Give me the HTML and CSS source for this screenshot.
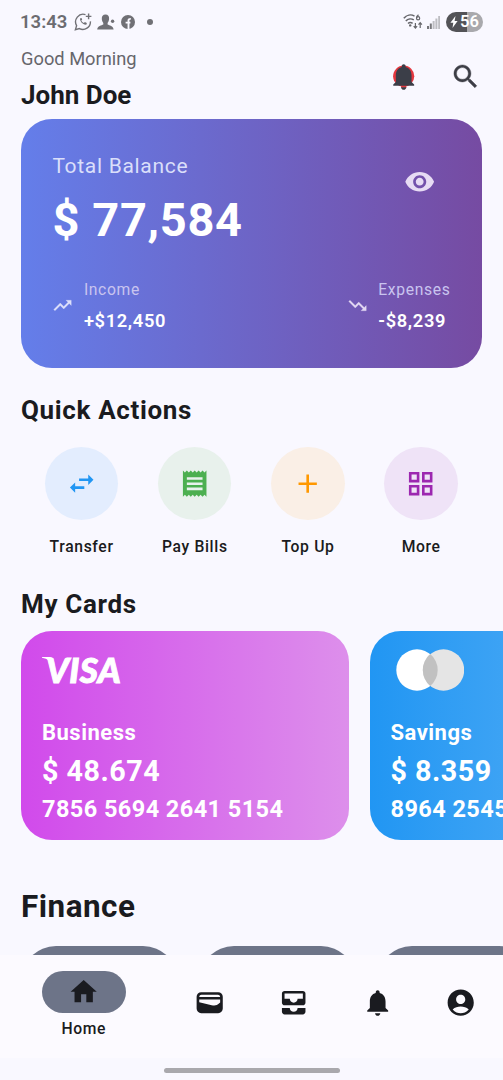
FILE: index.html
```html
<!DOCTYPE html>
<html lang="en">
<head>
<meta charset="utf-8">
<title>Wallet</title>
<link rel="stylesheet" href="styles.css">
</head>
<body>
<div class="screen">
  <div class="status">
    <span class="clock">13:43</span>
    <svg class="st-wa" viewBox="0 0 18 18" fill="none" stroke="#717176" stroke-width="1.4"><path d="M11.5 1.6A7.6 7.6 0 0 0 2.6 12.6L1.4 16.7l4-1.1A7.6 7.6 0 0 0 16.4 8.4"/><path d="M14.6 0.6v5.6M11.8 3.4h5.6"/><path d="M6.2 5.2c-1 2.600 3.200 7.400 6.400 6.400l.2-1.600-1.900-1-1 1C8.700 9.500 7.800 8.600 7.300 7.500l.9-1-.7-1.600z" fill="#717176" stroke="none"/></svg>
    <svg class="st-user" viewBox="0 0 18 16" fill="#707075"><path d="M8.500 0.500c2.600 0 3.800 1.700 3.600 4.400-.1 1.900-1 3.200-1.500 4v1.600c1.800 1 5.600 1.300 6 5H0.200c.4-3.700 4.300-4 6.100-5V8.900c-.5-.8-1.400-2.100-1.500-4C4.700 2.200 5.900.5 8.500.5z"/><circle cx="15.600" cy="7.300" r="1.700"/></svg>
    <svg class="st-fb" viewBox="0 0 14 14"><circle cx="7" cy="7" r="7" fill="#707075"/><path d="M7.500 14V5.300c0-1 .6-1.500 2.300-1.400M4.600 7.600h4.800" fill="none" stroke="#f9f8ff" stroke-width="1.900"/></svg>
    <span class="dot"></span>
    <span class="grow"></span>
    <svg class="st-wifi" viewBox="0 0 20 16" fill="none" stroke="#66666b" stroke-width="1.500"><path d="M.8 4.300C3.600.9 8 .2 11.500 2.100M2.800 7c2.100-2.300 5.500-2.700 8-1.100M5 9.500c1.200-1.100 3.100-1.200 4.600-.1"/><circle cx="7.200" cy="11.400" r="1.200" fill="#66666b" stroke="none"/><path d="M15.500.8c-1.500 1.200-2 2.200-1.900 3.200" stroke-width="1.200"/><circle cx="15.100" cy="4.300" r="1.600" stroke-width="1.200"/><path d="M12.400 9v5M10.700 12.200l1.700 1.900 1.700-1.900M17.200 14V8.800M15.500 10.600l1.700-1.900 1.700 1.900" stroke-width="1.200"/></svg>
    <svg class="st-sig" viewBox="0 0 13 13"><path d="M0 10h2v3H0zM2.800 7.500h2V13h-2z" fill="#77777b"/><path d="M5.600 5h2v8h-2zM8.400 2.500h2V13h-2zM11.200 0h1.800v13h-1.800z" fill="#bdbdc2"/></svg>
    <span class="battery"><svg viewBox="0 0 8 12" fill="#fff"><path d="M5.500 0L.4 6.800h2.900L2.500 12l5.100-7H4.600z"/></svg>56</span>
  </div>

  <header class="header">
    <div class="who"><div class="hello">Good Morning</div><div class="name">John Doe</div></div>
    <div class="alert"><svg class="icon" viewBox="0 0 24 24"><circle cx="12" cy="11.600" r="8.100" fill="#e4373f"/><path fill="#e4373f" d="M10 19h4v1.500h-4z"/><path fill="#3b3e48" d="M12 22c1.100 0 2-.9 2-2h-4c0 1.100.89 2 2 2zm6-6v-5c0-3.070-1.640-5.640-4.500-6.320V4c0-.83-.67-1.500-1.500-1.500s-1.500.67-1.500 1.500v.68C7.630 5.360 6 7.920 6 11v5l-2 2v1h16v-1l-2-2z"/></svg></div>
    <svg class="icon" viewBox="0 0 24 24" fill="#3d3e46" stroke="#3d3e46" stroke-width=".3"><path d="M15.500 14h-.79l-.28-.27C15.410 12.590 16 11.110 16 9.500 16 5.910 13.090 3 9.500 3S3 5.910 3 9.500 5.910 16 9.500 16c1.610 0 3.090-.59 4.230-1.570l.27.28v.79l5 4.990L20.490 19l-4.990-5zm-6 0C7.010 14 5 11.990 5 9.500S7.010 5 9.500 5 14 7.010 14 9.500 11.990 14 9.500 14z"/></svg>
  </header>

  <section class="balance">
    <div class="bal-top">
      <div><div class="bal-label">Total Balance</div><div class="bal-value">$ 77,584</div></div>
      <svg class="icon eye" viewBox="0 0 24 24" fill="#e7dcf4"><path d="M12 4.500C7 4.500 2.730 7.610 1 12c1.730 4.390 6 7.500 11 7.500s9.270-3.110 11-7.500c-1.730-4.390-6-7.500-11-7.500zM12 17c-2.760 0-5-2.240-5-5s2.240-5 5-5 5 2.240 5 5-2.240 5-5 5zm0-8c-1.660 0-3 1.340-3 3s1.340 3 3 3 3-1.340 3-3-1.340-3-3-3z"/></svg>
    </div>
    <div class="flows">
      <div class="flow"><svg class="trend" viewBox="0 0 24 24" fill="#dde0fa" stroke="#dde0fa" stroke-width=".3"><path d="M16 6l2.290 2.290-4.880 4.880-4-4L2 16.590 3.410 18l6-6 4 4 6.300-6.290L22 12V6z"/></svg><div><div class="flow-label">Income</div><div class="flow-value">+$12,450</div></div></div>
      <div class="flow"><svg class="trend" viewBox="0 0 24 24" fill="#e3d8f3" stroke="#e3d8f3" stroke-width=".3"><path d="M16 18l2.290-2.290-4.880-4.880-4 4L2 7.410 3.410 6l6 6 4-4 6.300 6.290L22 12v6z"/></svg><div><div class="flow-label">Expenses</div><div class="flow-value">-$8,239</div></div></div>
    </div>
  </section>

  <h2 class="title quick">Quick Actions</h2>
  <div class="actions">
    <div class="action"><span class="bubble blue"><svg class="icon" viewBox="0 0 24 24"><path d="M21 9l-4-4v3h-7v2h7v3M7 11l-4 4 4 4v-3h7v-2H7v-3z"/></svg></span>Transfer</div>
    <div class="action"><span class="bubble green"><svg class="icon" viewBox="0 0 24 24"><path d="M18 17H6v-2h12v2zm0-4H6v-2h12v2zm0-4H6V7h12v2zM3 22l1.500-1.500L6 22l1.500-1.500L9 22l1.500-1.500L12 22l1.500-1.500L15 22l1.500-1.500L18 22l1.500-1.500L21 22V2l-1.500 1.500L18 2l-1.500 1.500L15 2l-1.500 1.500L12 2l-1.500 1.500L9 2 7.500 3.500 6 2 4.500 3.500 3 2v20z"/></svg></span>Pay Bills</div>
    <div class="action"><span class="bubble orange"><svg class="icon" viewBox="0 0 24 24"><path d="M19 13h-6v6h-2v-6H5v-2h6V5h2v6h6v2z"/></svg></span>Top Up</div>
    <div class="action"><span class="bubble purple"><svg class="icon" viewBox="0 0 24 24"><path d="M3 3v8h8V3H3zm6 6H5V5h4v4zm-6 4v8h8v-8H3zm6 6H5v-4h4v4zm4-16v8h8V3h-8zm6 6h-4V5h4v4zm-6 4v8h8v-8h-8zm6 6h-4v-4h4v4z"/></svg></span>More</div>
  </div>

  <h2 class="title mine">My Cards</h2>
  <div class="cards">
    <article class="card pink">
      <div class="brand visa"><svg class="flick" viewBox="0 0 12 12" fill="#fff"><path d="M0 0h7.500c2 0 3 1 3.300 2.600L12 9C9.500 4.500 5.500 1.700 0 .7z"/></svg><span>VISA</span></div>
      <div class="kind">Business</div><div class="amount">$ 48.674</div><div class="number">7856 5694 2641 5154</div>
    </article>
    <article class="card azure">
      <div class="brand"><svg class="rings" viewBox="0 0 68 42"><circle cx="21" cy="21" r="20.700" fill="#fff"/><circle cx="47.500" cy="21" r="20.700" fill="#e5e5e5"/><path d="M34.250 5.100a20.700 20.700 0 0 1 0 31.800a20.700 20.700 0 0 1 0-31.800z" fill="#c1c1c1"/></svg></div>
      <div class="kind">Savings</div><div class="amount">$ 8.359</div><div class="number">8964 2545</div>
    </article>
  </div>

  <h2 class="title finance">Finance</h2>
  <div class="tiles"><div class="tile"></div><div class="tile"></div><div class="tile"></div></div>

  <nav class="nav">
    <div class="tab active"><span class="pill"><svg class="icon" viewBox="0 0 24 24"><path d="M10 20v-6h4v6h5v-8h3L12 3 2 12h3v8z"/></svg></span>Home</div>
    <div class="tab"><svg class="icon" viewBox="0 0 24 24"><path fill-rule="evenodd" d="M5.500 4h13A3.500 3.500 0 0 1 22 7.500v9a3.500 3.500 0 0 1-3.500 3.500h-13A3.500 3.500 0 0 1 2 16.500v-9A3.500 3.500 0 0 1 5.500 4zM4 7.700h16C19.800 6.600 19.300 6 18.300 6H5.700C4.700 6 4.200 6.600 4 7.700zM4 9.500v2.200l9.500 2.200c2.500.6 4.300.1 5.600-1.200l.9-.9V9.500z"/></svg></div>
    <div class="tab"><svg class="icon" viewBox="0 0 24 24"><path d="M19 3H5c-1.100 0-2 .9-2 2v7c0 1.100.9 2 2 2h14c1.100 0 2-.9 2-2V5c0-1.100-.9-2-2-2zm0 6h-4c0 1.620-1.380 3-3 3s-3-1.380-3-3H5V5h14v4zm-4 7h6v3c0 1.100-.9 2-2 2H5c-1.100 0-2-.9-2-2v-3h6c0 1.660 1.340 3 3 3s3-1.340 3-3z"/></svg></div>
    <div class="tab"><svg class="icon" viewBox="0 0 24 24"><path d="M12 22c1.100 0 2-.9 2-2h-4c0 1.100.89 2 2 2zm6-6v-5c0-3.070-1.640-5.640-4.500-6.320V4c0-.83-.67-1.500-1.500-1.500s-1.500.67-1.500 1.500v.68C7.630 5.360 6 7.920 6 11v5l-2 2v1h16v-1l-2-2z"/></svg></div>
    <div class="tab"><svg class="icon" viewBox="0 0 24 24"><path d="M12 2C6.480 2 2 6.480 2 12s4.480 10 10 10 10-4.480 10-10S17.520 2 12 2zm0 4c1.930 0 3.500 1.570 3.500 3.500S13.930 13 12 13s-3.500-1.570-3.500-3.500S10.070 6 12 6zm0 14c-2.030 0-4.430-.82-6.140-2.880C7.550 15.800 9.680 15 12 15s4.450.8 6.140 2.120C16.430 19.180 14.030 20 12 20z"/></svg></div>
  </nav>
  <div class="gesture"><span></span></div>
</div>
</body>
</html>
```
FILE: styles.css
```css
* { box-sizing: border-box; }
body { margin: 0; font-family: Roboto, sans-serif; color: #1a1b20; }
svg { display: block; flex: none; }
.screen { width: 503px; height: 1080px; overflow: hidden; background: #f9f8ff; display: flex; flex-direction: column; }
.screen > * { flex: none; }
.icon { width: 31.4px; height: 31.4px; }
.grow { flex: 1; }

.status { height: 44px; padding: 0 20px; display: flex; align-items: center; }
.clock { width: 54px; font-size: 18.5px; font-weight: 600; color: #6c6c71; letter-spacing: 0; }
.st-wa { width: 18px; height: 18px; }
.st-user { width: 18px; height: 16px; margin-left: 5px; }
.st-fb { width: 14px; height: 14px; margin-left: 6px; }
.dot { width: 6px; height: 6px; border-radius: 50%; background: #707075; margin-left: 12px; }
.st-wifi { width: 20px; height: 16px; margin-right: 4px; }
.st-sig { width: 13px; height: 13px; margin-right: 6px; }
.battery { width: 37px; height: 20px; border-radius: 10px; background: linear-gradient(90deg, #535357 56%, #a9a9ad 56%); color: #fff; font-size: 16.500px; font-weight: 600; line-height: 20px; display: flex; align-items: center; gap: 2px; padding-left: 4px; }
.battery svg { width: 8px; height: 12px; }

.header { height: 75px; padding: 0 21.500px 0 21px; display: flex; }
.who { flex: 1; padding-top: 3px; }
.hello { font-size: 18.3px; line-height: 24px; color: #66666c; letter-spacing: 0; }
.name { font-size: 26px; line-height: 36px; margin-top: 6px; font-weight: 700; letter-spacing: 0; }
.header .icon { margin-top: 17px; }
.alert { margin-right: 31px; }

.balance { margin: 0 21px; height: 249px; padding: 31px 31.500px 0 31.400px; border-radius: 31px; background: linear-gradient(90deg, #647eea, #764ba2); color: #fff; }
.bal-top { display: flex; justify-content: space-between; height: 101px; padding-right: 15.500px; }
.bal-label { font-size: 21px; line-height: 32px; letter-spacing: 0.69px; color: #dadffa; }
.bal-value { font-size: 47px; line-height: 56px; margin-top: 10px; font-weight: 700; letter-spacing: 0.65px; }
.eye { margin-top: 16px; }
.flows { display: flex; justify-content: space-between; padding-top: 28px; }
.flow { display: flex; align-items: center; gap: 10.500px; }
.trend { width: 21px; height: 21px; margin-top: -2px; }
.flow-label { font-size: 15.7px; line-height: 22px; letter-spacing: 0.65px; color: #c9c4ef; }
.flow-value { font-size: 18.3px; line-height: 24px; margin-top: 8px; font-weight: 600; letter-spacing: 0.65px; }

.title { margin: 0; padding-left: 21px; font-size: 26px; line-height: 36px; font-weight: 700; letter-spacing: 0.65px; }
.quick { margin-top: 24px; }
.actions { display: grid; grid-template-columns: repeat(4, 113.2px); padding: 19px 25px 0; height: 134px; }
.action { display: flex; flex-direction: column; align-items: center; font-size: 15.7px; line-height: 22px; font-weight: 500; letter-spacing: 0.65px; gap: 16px; }
.bubble { width: 73.400px; height: 73.400px; border-radius: 50%; display: flex; align-items: center; justify-content: center; }
.blue { background: #e3edfe; fill: #2196f3; }
.green { background: #e8f1ec; fill: #4caf50; }
.orange { background: #faefe6; fill: #ff9800; }
.purple { background: #efe3f7; fill: #9c27b0; }

.mine { margin-top: 24px; }
.cards { display: flex; gap: 21px; padding: 8.500px 0 0 21px; }
.card { flex: none; width: 327.500px; height: 209.500px; border-radius: 31px; padding: 18px 21px; color: #fff; font-weight: 700; }
.pink { background: linear-gradient(90deg, #d14aeb, #dd8feb); }
.azure { background: linear-gradient(90deg, #2196f3, #64b5f6); }
.brand { height: 71px; }
.rings { width: 68px; height: 42px; margin-left: 5px; }
.visa { position: relative; font-family: Lato, sans-serif; font-style: italic; font-weight: 900; font-size: 35px; line-height: 41px; letter-spacing: 0.3px; padding-left: 4px; -webkit-text-stroke: 1px #fff; }
.flick { position: absolute; left: 0; top: 8px; width: 12px; height: 12px; }
.kind { font-size: 22px; line-height: 26px; letter-spacing: 0.5px; }
.amount { font-size: 28.700px; line-height: 34px; margin-top: 8px; letter-spacing: 0.5px; }
.number { font-size: 23.500px; line-height: 28px; margin-top: 7px; letter-spacing: 0.43px; white-space: nowrap; }

.finance { font-size: 31.4px; line-height: 40px; margin-top: 47px; letter-spacing: 0.5px; }
.tiles { display: flex; gap: 21px; padding: 19px 0 0 21px; height: 28px; overflow: hidden; }
.tile { flex: none; width: 157px; height: 120px; border-radius: 35px; background: #6d7488; }

.nav { height: 103px; background: #fcfaff; display: grid; grid-template-columns: 2fr 1fr 1fr 1fr 1fr; padding-top: 16px; fill: #1a1b20; }
.tab { display: flex; flex-direction: column; align-items: center; padding-top: 16px; font-size: 15.700px; line-height: 22px; letter-spacing: 0.65px; font-weight: 500; }
.active { padding-top: 0; gap: 5px; }
.pill { width: 84px; height: 42px; border-radius: 21px; background: #6d7488; display: flex; align-items: center; justify-content: center; }
.gesture { height: 22px; padding-top: 10px; display: flex; justify-content: center; }
.gesture span { width: 176px; height: 5px; border-radius: 3px; background: #a9a8ad; }
```
